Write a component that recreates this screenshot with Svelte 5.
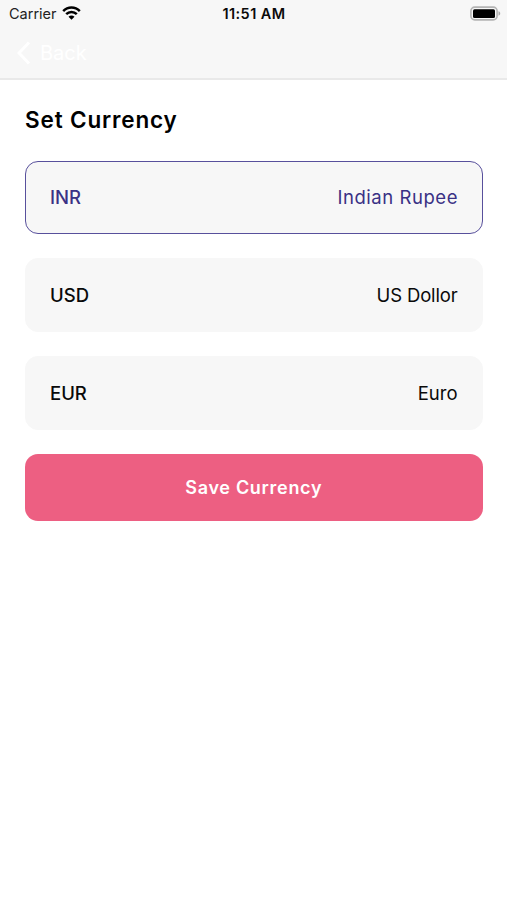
<script>
  const currencies = [
    { code: 'INR', name: 'Indian Rupee' },
    { code: 'USD', name: 'US Dollor' },
    { code: 'EUR', name: 'Euro' }
  ];
  let selected = $state('INR');
</script>

<div class="screen">
  <header>
    <div class="status">
      <div class="carrier">
        <span>Carrier</span>
        <svg width="19" height="14" viewBox="0 0 19 14">
          <g fill="none" stroke="#000" stroke-width="2.5">
            <path d="M1.2 5.1C5.9.3 13.1.3 17.8 5.1" />
            <path d="M4.2 8.200C7.200 5.200 11.800 5.200 14.800 8.200" />
          </g>
          <path d="M9.500 13.700L6.500 10.700C8.200 9.100 10.800 9.100 12.500 10.700Z" />
        </svg>
      </div>
      <span class="time">11:51 AM</span>
      <svg class="battery" width="31" height="16" viewBox="0 0 31 16">
        <rect x=".9" y="1.1" width="26.2" height="12.8" rx="3.8" fill="#f7f7f7" stroke="#b4b4b4" stroke-width="1.6" />
        <rect x="3" y="3.3" width="22" height="8.7" rx="1.5" />
        <path d="M28.500 5.300C30.800 6 30.800 9 28.500 9.700Z" fill="#aaa" />
      </svg>
    </div>
    <button class="back">
      <svg width="14" height="24" viewBox="0 0 14 24">
        <path d="M12 1.500L2 12L12 22.500" fill="none" stroke="#fff" stroke-width="3" />
      </svg>
      <span>Back</span>
    </button>
  </header>

  <main>
    <h1>Set Currency</h1>
    <div class="list">
      {#each currencies as c}
        <button class="row" class:active={selected === c.code} onclick={() => (selected = c.code)}>
          <span class="code">{c.code}</span>
          <span class="name {c.code.toLowerCase()}">{c.name}</span>
        </button>
      {/each}
    </div>
    <button class="save"><span>Save Currency</span></button>
  </main>
</div>

<style>
  :global(body) {
    margin: 0;
    background: #fff;
  }
  .screen {
    box-sizing: border-box;
    width: 100%;
    min-height: 900px;
    background: #fff;
    font-family: Inter, sans-serif;
    color: #0a0a0a;
  }
  button {
    font: inherit;
    color: inherit;
    border: 0;
    margin: 0;
    cursor: pointer;
  }
  header {
    box-sizing: border-box;
    height: 80px;
    background: #f7f7f7;
    border-bottom: 2px solid #e9e9e9;
  }
  .status {
    display: grid;
    grid-template-columns: 1fr auto 1fr;
    align-items: center;
    height: 27px;
    padding: 0 6px 0 9px;
    font-size: 14.5px;
    line-height: 27px;
  }
  .carrier {
    display: flex;
    align-items: center;
    gap: 5px;
    color: #222;
  }
  .carrier svg {
    margin-bottom: 2px;
  }
  .time {
    margin-right: 2px;
    font-weight: 600;
    font-size: 14.5px;
    letter-spacing: 0.4px;
  }
  .battery {
    justify-self: end;
  }
  .back {
    display: flex;
    align-items: center;
    gap: 9px;
    padding: 0 0 0 17px;
    height: 51px;
    background: none;
    color: #fff;
    font-size: 20px;
  }
  main {
    padding: 25px 24.5px 0 25px;
  }
  h1 {
    margin: 0 0 25.5px;
    font-size: 22.5px;
    line-height: 30px;
    font-weight: 600;
    letter-spacing: 0.85px;
    color: #000;
  }
  .list {
    display: flex;
    flex-direction: column;
    gap: 24px;
  }
  .row {
    box-sizing: border-box;
    display: flex;
    align-items: center;
    justify-content: space-between;
    width: 100%;
    height: 73.8px;
    padding: 0 24px;
    border: 1px solid #f7f7f7;
    border-radius: 13px;
    background: #f7f7f7;
    font-size: 18.5px;
  }
  .row.active {
    border-color: #58509c;
    color: #3a3185;
  }
  .code {
    font-weight: 500;
  }
  .name.inr {
    letter-spacing: 0.55px;
    margin-right: -0.5px;
  }
  .name.usd {
    letter-spacing: -0.15px;
  }
  .save {
    display: flex;
    align-items: center;
    justify-content: center;
    width: 100%;
    height: 67px;
    margin-top: 24px;
    padding: 1px 0 0;
    border-radius: 13px;
    background: #ed5f82;
    color: #fff;
    font-size: 18px;
    font-weight: 600;
    letter-spacing: 0.7px;
  }
</style>
